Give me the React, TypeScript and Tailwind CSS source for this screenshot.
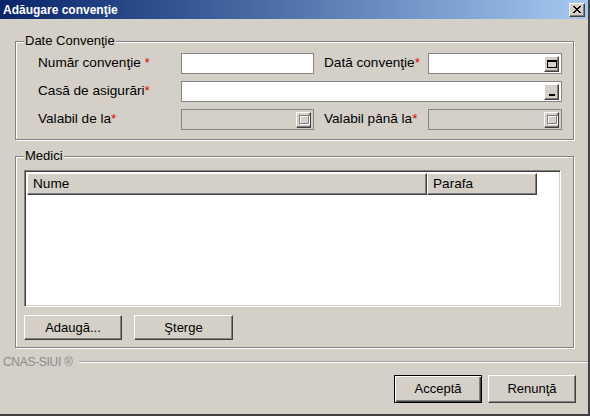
import React from "react";

const font = { fontFamily: '"Liberation Sans", Arial, sans-serif' };

const raised =
  "border border-t-white border-l-white border-r-[#404040] border-b-[#404040] shadow-[inset_-1px_-1px_0_#808080]";

const Req = () => <span className="text-[#e00000]">*</span>;

const PickButton = ({ kind }: { kind: "date" | "list" | "off" }) => (
  <div className={`w-[15px] h-[16px] bg-[#d4d0c8] flex items-center justify-center ${raised}`}>
    {kind === "date" && <div className="w-[10px] h-[8px] border border-black border-t-2" />}
    {kind === "list" && <div className="w-[6px] h-[2px] bg-black mt-[6px]" />}
    {kind === "off" && (
      <div className="w-[10px] h-[9px] border border-[#808080] shadow-[1px_1px_0_#fff,inset_1px_1px_0_#fff]" />
    )}
  </div>
);

const Field = ({
  width,
  disabled,
  pick,
}: {
  width: string;
  disabled?: boolean;
  pick?: "date" | "list" | "off";
}) => (
  <div
    className={`${width} h-[21px] border border-[#858585] flex items-center justify-end pr-[2px] ${
      disabled ? "bg-[#d4d0c8]" : "bg-white"
    }`}
  >
    {pick && <PickButton kind={pick} />}
  </div>
);

const Group = ({
  title,
  className,
  children,
}: {
  title: string;
  className: string;
  children: React.ReactNode;
}) => (
  <div
    className={`relative border border-[#808080] shadow-[inset_1px_1px_0_#fff,1px_1px_0_#fff] ${className}`}
  >
    <span className="absolute -top-[9px] left-[8px] bg-[#d4d0c8] px-[1px] text-[13px] leading-[16px] text-black">
      {title}
    </span>
    {children}
  </div>
);

const Btn = ({
  label,
  width,
  def,
}: {
  label: string;
  width: string;
  def?: boolean;
}) => (
  <button
    className={`${width} h-full text-[13px] text-black bg-[#d4d0c8] ${
      def
        ? "border border-black shadow-[inset_1px_1px_0_#fff,inset_-1px_-1px_0_#404040,inset_-2px_-2px_0_#808080]"
        : raised
    }`}
  >
    {label}
  </button>
);

export default function App() {
  return (
    <div
      style={font}
      className="w-[590px] h-[416px] bg-[#d4d0c8] flex flex-col border-r-2 border-b-2 border-r-[#404040] border-b-[#404040] text-black overflow-hidden"
    >
      {/* bara de titlu */}
      <div className="h-[19px] shrink-0 bg-gradient-to-r from-[#0a246a] to-[#a6caf0] flex items-center justify-between pl-[3px] pr-[3px]">
        <span className="text-white font-bold text-[12px] leading-none">Adăugare convenţie</span>
        <div className={`w-[16px] h-[14px] bg-[#d4d0c8] flex items-center justify-center ${raised}`}>
          <svg width="8" height="7" viewBox="0 0 8 7">
            <path d="M0 0L7 7M1 0L8 7M7 0L0 7M8 0L1 7" stroke="black" strokeWidth="1" />
          </svg>
        </div>
      </div>

      <div className="flex flex-col pl-[15px] pr-[14px]">
        <Group title="Date Convenţie" className="mt-[22px] h-[99px] pt-[11px] pl-[22px] flex flex-col gap-[7px]">
          <div className="flex items-center text-[13.6px]">
            <span className="w-[143px]">
              Număr convenţie <Req />
            </span>
            <Field width="w-[133px]" />
            <span className="w-[104px] ml-[10px]">
              Dată convenţie<Req />
            </span>
            <Field width="w-[134px]" pick="date" />
          </div>
          <div className="flex items-center text-[13.6px]">
            <span className="w-[143px]">
              Casă de asigurări<Req />
            </span>
            <Field width="w-[381px]" pick="list" />
          </div>
          <div className="flex items-center text-[13.6px]">
            <span className="w-[143px]">
              Valabil de la<Req />
            </span>
            <Field width="w-[133px]" disabled pick="off" />
            <span className="w-[104px] ml-[10px]">
              Valabil până la<Req />
            </span>
            <Field width="w-[134px]" disabled pick="off" />
          </div>
        </Group>

        <Group title="Medici" className="mt-[16px] h-[192px] pt-[13px] pl-[8px] flex flex-col">
          <div className="w-[537px] h-[137px] bg-white border border-t-[#808080] border-l-[#808080] border-r-white border-b-white shadow-[inset_1px_1px_0_#404040,inset_-1px_-1px_0_#d4d0c8] p-[2px] pr-[1px]">
            <div className="flex h-[22px] text-[13.6px]">
              <div className={`w-[400px] bg-[#d4d0c8] pl-[5px] flex items-center ${raised}`}>Nume</div>
              <div className={`w-[110px] bg-[#d4d0c8] pl-[5px] flex items-center ${raised}`}>Parafa</div>
            </div>
          </div>
          <div className="flex h-[25px] mt-[8px] gap-[12px]">
            <Btn label="Adaugă..." width="w-[98px]" />
            <Btn label="Şterge" width="w-[99px]" />
          </div>
        </Group>
      </div>

      <div className="flex items-center mt-[7px] h-[14px] pl-[3px]">
        <span className="text-[12px] text-[#8c8c8c] tracking-[-0.3px]">CNAS-SIUI ®</span>
        <div className="flex-1 ml-[6px] h-[2px] border-t border-t-[#a0a0a0] border-b border-b-white" />
      </div>

      <div className="flex justify-end gap-[6px] h-[28px] mt-[6px] pr-[12px]">
        <Btn label="Acceptă" width="w-[88px]" def />
        <Btn label="Renunţă" width="w-[88px]" />
      </div>
    </div>
  );
}
